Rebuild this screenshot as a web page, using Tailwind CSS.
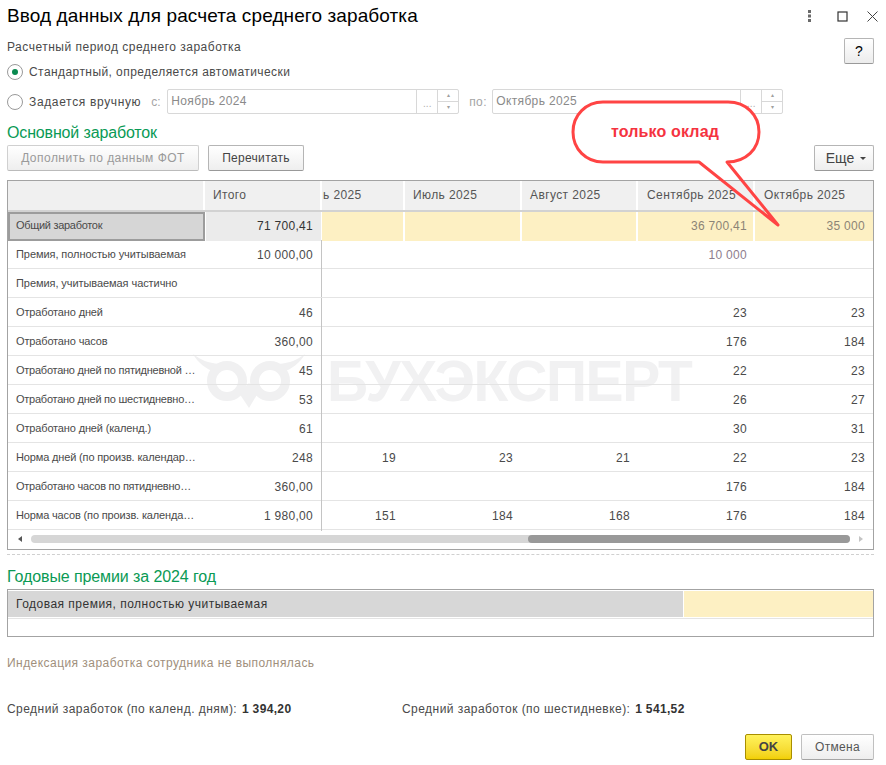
<!DOCTYPE html>
<html lang="ru">
  <head>
    <meta charset="UTF-8" />
    <title>Ввод данных для расчета среднего заработка</title>
    <script src="https://cdn.jsdelivr.net/npm/@tailwindcss/browser@4"></script>
  </head>
  <body class="bg-white">
    <div class="relative w-[886px] h-[765px] overflow-hidden pl-[7px] pr-[12px] font-['Liberation_Sans',Arial,sans-serif] text-[12px] text-[#4a4a4a]">
      <!-- Title bar -->
      <div class="flex items-center justify-between h-[32px]">
        <h1 class="text-[19px] leading-[32px] tracking-[0.1px] text-black">Ввод данных для расчета среднего заработка</h1>
        <div class="flex items-center mr-[-4px]">
          <svg width="6" height="14" viewBox="0 0 6 14" class="mr-[24px]"><g fill="#6a6a6a"><rect x="1" y="1" width="3" height="3" /><rect x="1" y="5.5" width="3" height="3" /><rect x="1" y="10" width="3" height="3" /></g></svg>
          <svg width="11" height="11" viewBox="0 0 11 11" class="mr-[19px]"><rect x="1" y="1" width="9" height="9" fill="none" stroke="#333" stroke-width="1.2" /></svg>
          <svg width="11" height="11" viewBox="0 0 11 11"><path d="M.5.5l10 10M10.5.5l-10 10" fill="none" stroke="#444" stroke-width="1" /></svg>
        </div>
      </div>

      <!-- Period -->
      <div class="flex justify-between h-[32px] mt-[6px]">
        <div class="mt-[2px] leading-[14px] tracking-[0.5px]">Расчетный период среднего заработка</div>
        <button class="w-[30px] h-[26px] rounded-[2px] border border-[#b5b5b5] border-b-[#999] bg-gradient-to-b from-white to-[#ececec] text-[14px] text-black">?</button>
      </div>
      <div class="flex items-center h-[16px] mt-[-6px]">
        <span class="flex items-center justify-center w-[16px] h-[16px] rounded-full border border-[#9a9a9a]"><span class="w-[6px] h-[6px] rounded-full bg-[#0a8a50]"></span></span>
        <span class="ml-[6px] tracking-[0.43px]">Стандартный, определяется автоматически</span>
      </div>
      <div class="flex items-center h-[25px] mt-[9px]">
        <span class="w-[16px] h-[16px] rounded-full border border-[#9a9a9a]"></span>
        <span class="ml-[6px] tracking-[0.65px]">Задается вручную</span>
        <span class="ml-[10px] w-[16px] text-[#a5a5a5]">с:</span>
        <div class="flex w-[292px] h-[25px] rounded-[2px] border border-[#d8d8d8] text-[#8a8a8a]">
          <span class="flex-1 pl-[3px] leading-[23px] tracking-[0.35px]">Ноябрь 2024</span>
          <span class="w-[21px] border-l border-[#d8d8d8] text-center text-[10px] leading-[28px] text-[#b0b0b0]">...</span>
          <span class="flex flex-col w-[21px] border-l border-[#d8d8d8] text-center text-[6px] leading-[11px] text-[#a0a0a0]"><span class="border-b border-[#d8d8d8]">▴</span><span>▾</span></span>
        </div>
        <span class="ml-[10px] w-[23px] text-[#a5a5a5] tracking-[0.35px]">по:</span>
        <div class="flex w-[291px] h-[25px] rounded-[2px] border border-[#d8d8d8] text-[#8a8a8a]">
          <span class="flex-1 pl-[3px] leading-[23px] tracking-[0.35px]">Октябрь 2025</span>
          <span class="w-[21px] border-l border-[#d8d8d8] text-center text-[10px] leading-[28px] text-[#b0b0b0]">...</span>
          <span class="flex flex-col w-[21px] border-l border-[#d8d8d8] text-center text-[6px] leading-[11px] text-[#a0a0a0]"><span class="border-b border-[#d8d8d8]">▴</span><span>▾</span></span>
        </div>
      </div>

      <h2 class="mt-[9px] h-[22px] text-[16px] leading-[20px] tracking-[-0.15px] text-[#0a9a55]">Основной заработок</h2>

      <!-- Toolbar -->
      <div class="flex h-[26px]">
        <button class="w-[192px] rounded-[2px] border border-[#d0d0d0] border-b-[#bbb] bg-gradient-to-b from-white to-[#eeeeee] tracking-[0.48px] text-[#9a9a9a]">Дополнить по данным ФОТ</button>
        <button class="ml-[9px] w-[96px] rounded-[2px] border border-[#b5b5b5] border-b-[#999] bg-gradient-to-b from-white to-[#eeeeee] tracking-[0.3px] text-[#444]">Перечитать</button>
        <button class="ml-auto flex items-center justify-center gap-[6px] w-[60px] pl-[4px] rounded-[2px] border border-[#b5b5b5] border-b-[#999] bg-gradient-to-b from-white to-[#eeeeee] text-[14px] text-[#444]">Еще<span class="w-0 h-0 border-x-[3px] border-x-transparent border-t-[3px] border-t-[#444]"></span></button>
      </div>

      <!-- Main table -->
      <div class="relative mt-[9px] w-[867px] h-[370px] border border-[#a3a3a3] text-[11px]">
        <!-- Watermark -->
        <div class="absolute left-[184px] top-[170px] flex items-center text-[#f1f1f2]">
          <svg width="114" height="60" viewBox="0 0 114 60">
            <g fill="none" stroke="#f0f0f1" stroke-width="9"><circle cx="35" cy="30" r="15.5" /><circle cx="78" cy="30" r="15.5" /></g>
            <path d="M1 3c8 6 15 9 26 10l-4 8C14 18 6 12 1 3zM113 3c-8 6-15 9-26 10l4 8c9-3 17-9 22-18zM47 42l10 15 9-15-9-10z" fill="#f0f0f1" />
          </svg>
          <span class="ml-[21px] text-[57px] leading-[60px] font-bold tracking-[-1.4px]">БУХЭКСПЕРТ</span>
        </div>

        <div class="relative">
          <!-- Header -->
          <div class="grid grid-cols-[197px_117px_83px_117px_116px_117px_118px] h-[31px] border-b-2 border-[#d2d2d2] bg-[#f0f0f0] text-[12px] leading-[29px] tracking-[0.4px] text-[#555]">
            <div class="border-r-2 border-white"></div>
            <div class="border-r-2 border-white pl-[8px]">Итого</div>
            <div class="border-r-2 border-white pl-px">ь 2025</div>
            <div class="border-r-2 border-white pl-[8px]">Июль 2025</div>
            <div class="border-r-2 border-white pl-[8px]">Август 2025</div>
            <div class="border-r-2 border-white pl-[9px]">Сентябрь 2025</div>
            <div class="pl-[9px]">Октябрь 2025</div>
          </div>

          <!-- Row: total -->
          <div class="grid grid-cols-[197px_117px_83px_117px_116px_117px_118px] h-[28px] border-b border-[#e4e4e4] text-[12px] leading-[29px] tracking-[0.3px]">
            <div class="border-2 border-[#9c9c9c] bg-[#d6d6d6] pl-[6px] text-[11px] leading-[22px] tracking-[-0.3px]">Общий заработок</div>
            <div class="border-x border-white bg-[#ebebeb] pr-[8px] text-right text-[#333]">71 700,41</div>
            <div class="border-r-2 border-white bg-[#fdf0c3]"></div>
            <div class="border-r-2 border-white bg-[#fdf0c3]"></div>
            <div class="border-r-2 border-white bg-[#fdf0c3]"></div>
            <div class="border-r-2 border-white bg-[#fdf0c3] pr-[6px] text-right text-[#8c8476]">36 700,41</div>
            <div class="bg-[#fdf0c3] pr-[8px] text-right text-[#8c8476]">35 000</div>
          </div>

          <!-- Rows -->
          <div class="grid grid-cols-[197px_117px_83px_117px_116px_117px_118px] h-[29px] border-b border-[#e4e4e4] leading-[28px]">
            <div class="pl-[8px] tracking-[-0.07px]">Премия, полностью учитываемая</div>
            <div class="border-r border-[#c4c4c4] pr-[8px] text-right text-[12px] leading-[30px] tracking-[0.3px]">10 000,00</div>
            <div></div><div></div><div></div>
            <div class="pr-[8px] text-right text-[12px] leading-[30px] tracking-[0.3px] text-[#8d7d8d]">10 000</div>
            <div></div>
          </div>
          <div class="grid grid-cols-[197px_117px_83px_117px_116px_117px_118px] h-[29px] border-b border-[#e4e4e4] leading-[28px]">
            <div class="pl-[8px] tracking-[-0.07px]">Премия, учитываемая частично</div>
            <div class="border-r border-[#c4c4c4]"></div>
            <div></div><div></div><div></div><div></div><div></div>
          </div>
          <div class="grid grid-cols-[197px_117px_83px_117px_116px_117px_118px] h-[29px] border-b border-[#e4e4e4] leading-[28px]">
            <div class="pl-[8px] tracking-[-0.15px]">Отработано дней</div>
            <div class="border-r border-[#c4c4c4] pr-[8px] text-right text-[12px] leading-[30px] tracking-[0.3px]">46</div>
            <div></div><div></div><div></div>
            <div class="pr-[8px] text-right text-[12px] leading-[30px] tracking-[0.3px]">23</div>
            <div class="pr-[8px] text-right text-[12px] leading-[30px] tracking-[0.3px]">23</div>
          </div>
          <div class="grid grid-cols-[197px_117px_83px_117px_116px_117px_118px] h-[29px] border-b border-[#e4e4e4] leading-[28px]">
            <div class="pl-[8px] tracking-[-0.15px]">Отработано часов</div>
            <div class="border-r border-[#c4c4c4] pr-[8px] text-right text-[12px] leading-[30px] tracking-[0.3px]">360,00</div>
            <div></div><div></div><div></div>
            <div class="pr-[8px] text-right text-[12px] leading-[30px] tracking-[0.3px]">176</div>
            <div class="pr-[8px] text-right text-[12px] leading-[30px] tracking-[0.3px]">184</div>
          </div>
          <div class="grid grid-cols-[197px_117px_83px_117px_116px_117px_118px] h-[29px] border-b border-[#e4e4e4] leading-[28px]">
            <div class="pl-[8px] tracking-[-0.25px]">Отработано дней по пятидневной …</div>
            <div class="border-r border-[#c4c4c4] pr-[8px] text-right text-[12px] leading-[30px] tracking-[0.3px]">45</div>
            <div></div><div></div><div></div>
            <div class="pr-[8px] text-right text-[12px] leading-[30px] tracking-[0.3px]">22</div>
            <div class="pr-[8px] text-right text-[12px] leading-[30px] tracking-[0.3px]">23</div>
          </div>
          <div class="grid grid-cols-[197px_117px_83px_117px_116px_117px_118px] h-[29px] border-b border-[#e4e4e4] leading-[28px]">
            <div class="pl-[8px] tracking-[-0.25px]">Отработано дней по шестидневно…</div>
            <div class="border-r border-[#c4c4c4] pr-[8px] text-right text-[12px] leading-[30px] tracking-[0.3px]">53</div>
            <div></div><div></div><div></div>
            <div class="pr-[8px] text-right text-[12px] leading-[30px] tracking-[0.3px]">26</div>
            <div class="pr-[8px] text-right text-[12px] leading-[30px] tracking-[0.3px]">27</div>
          </div>
          <div class="grid grid-cols-[197px_117px_83px_117px_116px_117px_118px] h-[29px] border-b border-[#e4e4e4] leading-[28px]">
            <div class="pl-[8px] tracking-[-0.15px]">Отработано дней (календ.)</div>
            <div class="border-r border-[#c4c4c4] pr-[8px] text-right text-[12px] leading-[30px] tracking-[0.3px]">61</div>
            <div></div><div></div><div></div>
            <div class="pr-[8px] text-right text-[12px] leading-[30px] tracking-[0.3px]">30</div>
            <div class="pr-[8px] text-right text-[12px] leading-[30px] tracking-[0.3px]">31</div>
          </div>
          <div class="grid grid-cols-[197px_117px_83px_117px_116px_117px_118px] h-[29px] border-b border-[#e4e4e4] leading-[28px]">
            <div class="pl-[8px] tracking-[-0.15px]">Норма дней (по произв. календар…</div>
            <div class="border-r border-[#c4c4c4] pr-[8px] text-right text-[12px] leading-[30px] tracking-[0.3px]">248</div>
            <div class="pr-[9px] text-right text-[12px] leading-[30px] tracking-[0.3px]">19</div>
            <div class="pr-[9px] text-right text-[12px] leading-[30px] tracking-[0.3px]">23</div>
            <div class="pr-[8px] text-right text-[12px] leading-[30px] tracking-[0.3px]">21</div>
            <div class="pr-[8px] text-right text-[12px] leading-[30px] tracking-[0.3px]">22</div>
            <div class="pr-[8px] text-right text-[12px] leading-[30px] tracking-[0.3px]">23</div>
          </div>
          <div class="grid grid-cols-[197px_117px_83px_117px_116px_117px_118px] h-[29px] border-b border-[#e4e4e4] leading-[28px]">
            <div class="pl-[8px] tracking-[-0.25px]">Отработано часов по пятидневно…</div>
            <div class="border-r border-[#c4c4c4] pr-[8px] text-right text-[12px] leading-[30px] tracking-[0.3px]">360,00</div>
            <div></div><div></div><div></div>
            <div class="pr-[8px] text-right text-[12px] leading-[30px] tracking-[0.3px]">176</div>
            <div class="pr-[8px] text-right text-[12px] leading-[30px] tracking-[0.3px]">184</div>
          </div>
          <div class="grid grid-cols-[197px_117px_83px_117px_116px_117px_118px] h-[29px] border-b border-[#e4e4e4] leading-[28px]">
            <div class="pl-[8px] tracking-[-0.15px]">Норма часов (по произв. календа…</div>
            <div class="border-r border-[#c4c4c4] pr-[8px] text-right text-[12px] leading-[30px] tracking-[0.3px]">1 980,00</div>
            <div class="pr-[9px] text-right text-[12px] leading-[30px] tracking-[0.3px]">151</div>
            <div class="pr-[9px] text-right text-[12px] leading-[30px] tracking-[0.3px]">184</div>
            <div class="pr-[8px] text-right text-[12px] leading-[30px] tracking-[0.3px]">168</div>
            <div class="pr-[8px] text-right text-[12px] leading-[30px] tracking-[0.3px]">176</div>
            <div class="pr-[8px] text-right text-[12px] leading-[30px] tracking-[0.3px]">184</div>
          </div>

          <!-- Scrollbar -->
          <div class="flex items-center h-[18px] pl-[10px] pr-[10px]">
            <span class="w-0 h-0 border-y-[3px] border-y-transparent border-r-[4px] border-r-[#555]"></span>
            <div class="flex justify-end ml-[9px] mr-[9px] flex-1 h-[8px] rounded-full bg-[#d6d6d6]">
              <div class="w-[322px] h-[8px] rounded-full bg-[#999]"></div>
            </div>
            <span class="w-0 h-0 border-y-[3px] border-y-transparent border-l-[4px] border-l-[#c4c4c4]"></span>
          </div>
        </div>
      </div>

      <div class="mt-[4px] border-t border-dashed border-[#d0d0d0]"></div>

      <h2 class="mt-[12px] h-[22px] text-[16px] leading-[20px] tracking-[-0.1px] text-[#0a9a55]">Годовые премии за 2024 год</h2>

      <!-- Bonus table -->
      <div class="w-[867px] h-[48px] border border-[#a3a3a3]">
        <div class="flex h-[28px] border-y border-white">
          <div class="w-[676px] border-r border-white bg-[#d7d7d7] pl-[8px] text-[12px] leading-[26px] tracking-[0.48px] text-[#333]">Годовая премия, полностью учитываемая</div>
          <div class="flex-1 bg-[#fdf0c3]"></div>
        </div>
        <div class="border-t border-[#e4e4e4]"></div>
      </div>

      <div class="mt-[19px] leading-[14px] tracking-[0.45px] text-[#a08f7c]">Индексация заработка сотрудника не выполнялась</div>

      <div class="flex mt-[32px] leading-[14px] tracking-[0.45px]">
        <div class="w-[395px]">Средний заработок (по календ. дням): <b class="ml-[1px] tracking-[0.35px] text-[#333]">1 394,20</b></div>
        <div>Средний заработок (по шестидневке): <b class="ml-[1px] tracking-[0.35px] text-[#333]">1 541,52</b></div>
      </div>

      <!-- Footer buttons -->
      <div class="flex justify-end gap-[9px] mt-[18px] h-[26px]">
        <button class="w-[47px] rounded-[2px] border border-[#a88e00] bg-gradient-to-b from-[#fff25a] to-[#f2d000] text-[13px] font-bold text-[#444]">OK</button>
        <button class="w-[73px] rounded-[2px] border border-[#c0c0c0] border-b-[#a5a5a5] bg-gradient-to-b from-white to-[#eeeeee] tracking-[0.3px] text-[#555]">Отмена</button>
      </div>

      <!-- Callout -->
      <svg class="absolute left-[565px] top-[95px]" width="225" height="135" viewBox="565 95 225 135">
        <path d="M603 102H728C746 102 759 115 759 132C759 149 746 162 727 162H603C586 162 573 149 573 132C573 115 586 102 603 102Z" fill="#fff" />
        <path d="M603 102H728C746 102 759 115 759 132C759 149 746 162 727 162L778 225L699 162H603C586 162 573 149 573 132C573 115 586 102 603 102Z" fill="none" stroke="#ff4444" stroke-width="3" stroke-linejoin="round" />
      </svg>
      <div class="absolute left-[611px] top-[123px] text-[16px] leading-[18px] tracking-[0.15px] font-bold text-[#f5333f]">только оклад</div>
    </div>
  </body>
</html>
